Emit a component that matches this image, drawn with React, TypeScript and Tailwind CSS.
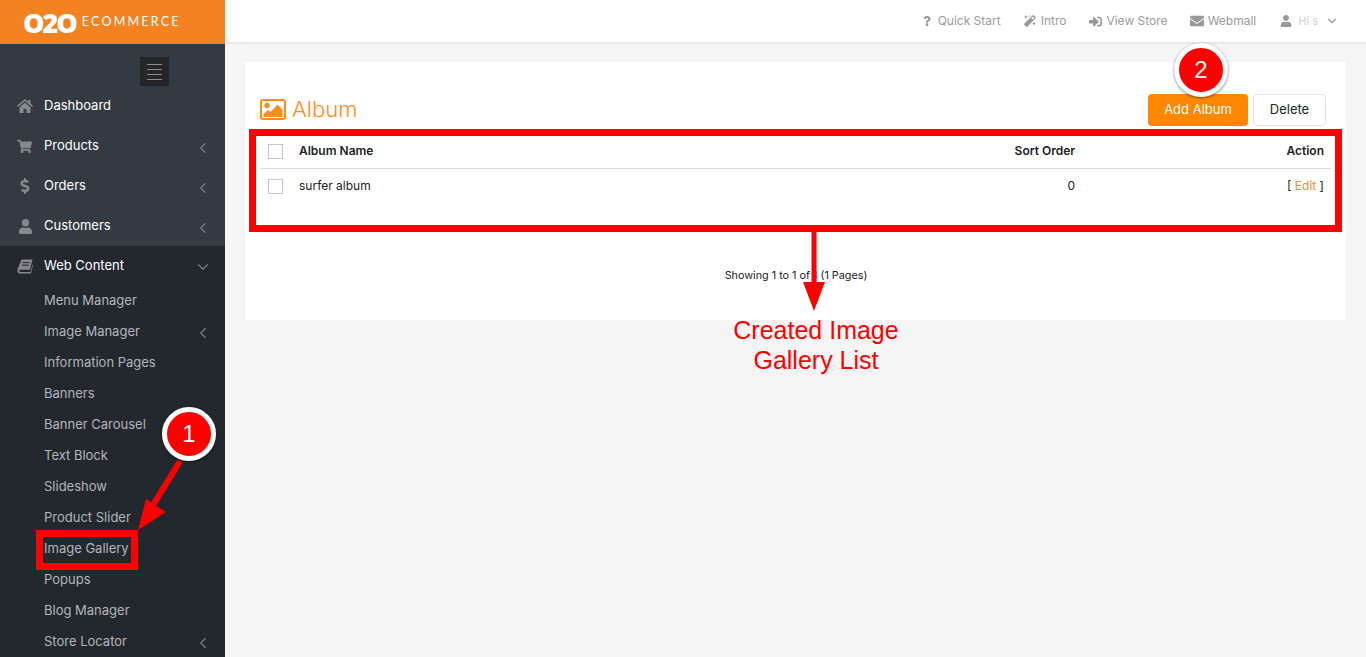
import { FaDollarSign, FaEnvelope, FaMagic, FaQuestion, FaShoppingCart, FaSignInAlt, FaUser } from "react-icons/fa";
import { ChevronDown, ChevronLeft } from "lucide-react";

function HomeIcon() {
  return (
    <svg width="16" height="14" viewBox="0 0 16 14" fill="currentColor">
      <path d="M8 0 L0 6.8 L1 8 L8 2 L15 8 L16 6.8 L13.5 4.6 V1 H11.3 V2.8 Z" />
      <path d="M2.5 8.2 L8 3.5 L13.5 8.2 V14 H9.5 V10 H6.5 V14 H2.5 Z" />
    </svg>
  );
}

function BookIcon() {
  return (
    <svg width="16" height="15" viewBox="0 0 16 15" fill="currentColor">
      <path d="M4.5 .5 H15.5 L12.8 10.8 H3.2 C2 10.8 2 13 3.4 13 H13.4 L15.4 5.5 L16 6 L14 14.5 H3 C.6 14.5 0 12 .6 10 Z" />
      <path d="M5.6 3.6 H12.6 M4.9 6.2 H11.9" stroke="#23282e" strokeWidth="1" />
    </svg>
  );
}

function PictureIcon() {
  return (
    <svg width="26" height="21" viewBox="0 0 26 21" fill="none">
      <rect x="1" y="1" width="24" height="19" rx="2" stroke="currentColor" strokeWidth="2" />
      <circle cx="7" cy="6.5" r="2.7" fill="currentColor" />
      <path d="M3.5 18 V15 L8 11 L10.5 13 L17.5 5.5 L22.5 10.5 V18 Z" fill="currentColor" />
    </svg>
  );
}

const mainMenu = [
  { label: "Dashboard", icon: <HomeIcon />, arrow: false },
  { label: "Products", icon: <FaShoppingCart size={15} />, arrow: true },
  { label: "Orders", icon: <FaDollarSign size={16} />, arrow: true },
  { label: "Customers", icon: <FaUser size={15} className="ml-px" />, arrow: true },
];

const subMenu = [
  { label: "Menu Manager" },
  { label: "Image Manager", arrow: true },
  { label: "Information Pages" },
  { label: "Banners" },
  { label: "Banner Carousel" },
  { label: "Text Block" },
  { label: "Slideshow" },
  { label: "Product Slider" },
  { label: "Image Gallery" },
  { label: "Popups" },
  { label: "Blog Manager" },
  { label: "Store Locator", arrow: true },
];

const topLinks = [
  { label: "Quick Start", icon: <FaQuestion size={10} /> },
  { label: "Intro", icon: <FaMagic size={12} /> },
  { label: "View Store", icon: <FaSignInAlt size={13} /> },
  { label: "Webmall", icon: <FaEnvelope size={14} /> },
];

function Sidebar() {
  return (
    <aside className="flex h-[657px] w-[225px] shrink-0 flex-col overflow-hidden bg-[#23282e]">
      {/* Logo */}
      <div className="flex h-11 shrink-0 items-center bg-[#f58220] pl-[23px] text-white">
        <span className="text-[27px] leading-none font-extrabold tracking-[-2px] font-['Open_Sans',sans-serif]">O2O</span>
        <span className="ml-[6px] text-[12.5px] tracking-[2.2px] font-['Lato',sans-serif]">ECOMMERCE</span>
      </div>

      <div className="bg-[#343a41]">
        {/* Collapse button */}
        <div className="flex h-[42px] items-start justify-end pt-[13px] pr-[56px]">
          <div className="flex h-[29px] w-[29px] flex-col items-center justify-center gap-[4px] bg-[#232528]">
            <span className="h-px w-[15px] bg-[#8a8a8a]" />
            <span className="h-px w-[15px] bg-[#8a8a8a]" />
            <span className="h-px w-[15px] bg-[#8a8a8a]" />
            <span className="h-px w-[15px] bg-[#8a8a8a]" />
          </div>
        </div>
        {mainMenu.map((item) => (
          <div key={item.label} className="flex h-10 items-center pr-[17px] pl-[17px] text-[13px] text-white">
            <span className="flex w-[27px] text-[#85888c]">{item.icon}</span>
            <span className="flex-1 pb-px">{item.label}</span>
            {item.arrow && <ChevronLeft size={18} strokeWidth={1.5} className="-mr-[4px] mt-[3px] text-[#7c8085]" />}
          </div>
        ))}
      </div>

      {/* Web Content */}
      <div className="flex h-10 shrink-0 items-center pr-[17px] pl-[17px] text-[13px] text-white">
        <span className="flex w-[27px] text-[#85888c]"><BookIcon /></span>
        <span className="flex-1 pb-px">Web Content</span>
        <ChevronDown size={18} strokeWidth={1.5} className="-mr-[4px] mt-[2px] text-[#7c8085]" />
      </div>
      <div className="-mt-[1px]">
        {subMenu.map((item) => (
          <div key={item.label} className="flex h-[31px] items-center pr-[17px] pl-11 text-[13px] text-[#b3b5b8]">
            <span className="flex-1">{item.label}</span>
            {item.arrow && <ChevronLeft size={18} strokeWidth={1.5} className="-mr-[4px] mt-[2px] text-[#7c8085]" />}
          </div>
        ))}
      </div>
    </aside>
  );
}

function Header() {
  return (
    <header className="flex h-11 shrink-0 items-center justify-end border-b-2 border-[#e9e9e9] bg-white pr-[30px] text-[12px] text-[#9b9b9b]">
      {topLinks.map((link) => (
        <div key={link.label} className="mr-[22px] flex items-center gap-[4px]">
          <span className="flex w-[14px] justify-center text-[#999]">{link.icon}</span>
          <span>{link.label}</span>
        </div>
      ))}
      <div className="-mr-[3px] ml-[2px] flex items-center gap-[6px]">
        <FaUser size={12} className="text-[#999]" />
        <span className="text-[11px] text-[#cfcfcf]">Hi s</span>
        <ChevronDown size={14} className="ml-px text-[#999]" />
      </div>
    </header>
  );
}

function AlbumCard() {
  return (
    <section className="mt-[18px] ml-5 h-[258px] w-[1101px] bg-white px-[15px]">
      <div className="flex h-[64px] items-end">
        <div className="flex flex-1 items-center gap-[6px] text-[#ff8c1a]">
          <PictureIcon />
          <span className="text-[22px] font-light">Album</span>
        </div>
        <button className="mr-[5px] h-8 w-[100px] rounded-[4px] bg-[#ff8800] text-[13px] text-white">Add Album</button>
        <button className="mr-[5px] h-8 w-[73px] rounded-[4px] border border-[#e2e2e2] bg-white text-[13px] text-[#222]">Delete</button>
      </div>

      {/* Album table */}
      <div className="mt-[8px] text-[12px] text-[#222]">
        <div className="flex h-[35px] items-center border-b border-[#dcdcdc] font-semibold">
          <span className="mr-[16px] ml-2 h-[15px] w-[15px] border border-[#c4c4c4]" />
          <span className="flex-1">Album Name</span>
          <span className="w-[120px] text-right">Sort Order</span>
          <span className="mr-[7px] w-[249px] text-right">Action</span>
        </div>
        <div className="flex h-[34px] items-center">
          <span className="mr-[16px] ml-2 h-[15px] w-[15px] border border-[#c4c4c4]" />
          <span className="flex-1">surfer album</span>
          <span className="w-[120px] text-right">0</span>
          <span className="mr-[7px] w-[249px] text-right">
            [ <span className="text-[#f58a3c]">Edit</span> ]
          </span>
        </div>
      </div>

      <p className="mt-[66px] ml-[1px] text-center text-[10.8px] leading-[14px] text-[#222]">Showing 1 to 1 of 1 (1 Pages)</p>
    </section>
  );
}

function Annotations() {
  return (
    <>
      {/* Red frames */}
      <div className="absolute top-[129px] left-[249px] h-[103px] w-[1093px] border-[7px] border-[#ff0000]" />
      <div className="absolute top-[530px] left-[36px] h-[40px] w-[102px] border-[7px] border-[#ff0000]" />

      {/* Arrows */}
      <svg className="absolute top-0 left-0" width="1366" height="657" viewBox="0 0 1366 657" fill="none">
        <path d="M180 461 L150 510" stroke="#ff0000" strokeWidth="6" />
        <path d="M138 530 L146 499 L166 512 Z" fill="#ff0000" />
        <path d="M814 231 V282" stroke="#ff0000" strokeWidth="5" />
        <path d="M803 282 H825 L814 311 Z" fill="#ff0000" />
      </svg>

      {/* Numbered badges */}
      <div className="absolute top-[407px] left-[162px] flex h-[54px] w-[54px] items-center justify-center rounded-full border-[5px] border-white bg-[#ff0000] text-[24px] text-white shadow-[0_1px_3px_rgba(0,0,0,0.5)] font-['Liberation_Sans',sans-serif]">
        1
      </div>
      <div className="absolute top-[43px] left-[1174px] flex h-[54px] w-[54px] items-center justify-center rounded-full border-[5px] border-white bg-[#ff0000] text-[24px] text-white shadow-[0_1px_3px_rgba(0,0,0,0.5)] font-['Liberation_Sans',sans-serif]">
        2
      </div>

      {/* Caption */}
      <div className="absolute top-[315px] left-[716px] w-[200px] text-center text-[25px] leading-[30px] text-[#ff0000] font-['Liberation_Sans',sans-serif]">
        Created Image
        <br />
        Gallery List
      </div>
    </>
  );
}

export default function App() {
  return (
    <div className="relative flex h-[657px] w-[1366px] overflow-hidden bg-[#f5f5f5] font-['Inter',sans-serif]">
      <Sidebar />
      <main className="flex flex-1 flex-col">
        <Header />
        <AlbumCard />
      </main>
      <Annotations />
    </div>
  );
}
